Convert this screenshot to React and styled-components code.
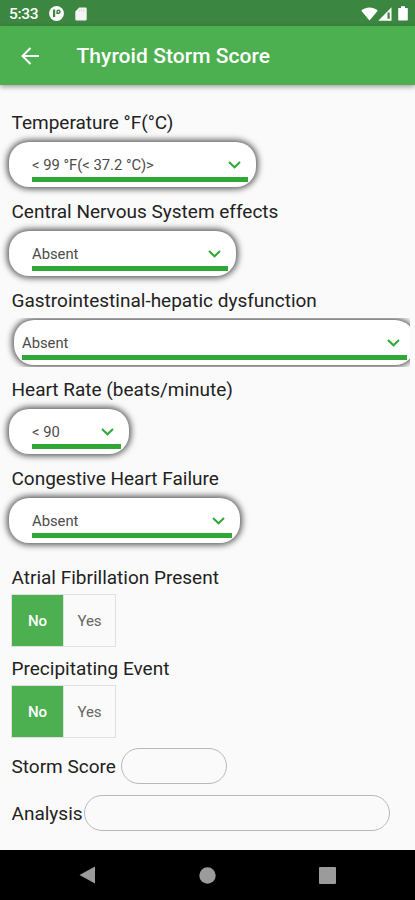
import React, { useState } from "react";
import styled, { createGlobalStyle } from "styled-components";

const GlobalStyle = createGlobalStyle`
  * {
    box-sizing: border-box;
  }

  body {
    margin: 0;
    background: #fafafa;
    font-family: Roboto, "Liberation Sans", sans-serif;
  }

  button {
    font-family: inherit;
  }
`;

// --- STYLED COMPONENTS ---

const Screen = styled.div`
  width: 415px;
  height: 900px;
  display: flex;
  flex-direction: column;
  overflow: hidden;
  background: #fafafa;
`;

const StatusBar = styled.div`
  height: 26px;
  flex: none;
  display: flex;
  align-items: center;
  justify-content: space-between;
  padding: 1px 7px 0 9px;
  background: #3b8640;
  color: #fff;
`;

const StatusGroup = styled.div`
  display: flex;
  align-items: center;
  gap: ${(p) => p.$gap};

  svg {
    display: block;
  }
`;

const Clock = styled.span`
  width: 29px;
  font-size: 15.5px;
  font-weight: 500;
  letter-spacing: -0.3px;
`;

const AppBar = styled.header`
  height: 59px;
  flex: none;
  display: flex;
  align-items: center;
  padding: 0 20px;
  background: #4caf50;
  color: #fff;
  box-shadow: 0 2px 5px rgba(0, 0, 0, 0.36);
  z-index: 1;
`;

const BackButton = styled.button`
  display: flex;
  width: 56.5px;
  padding: 0;
  border: none;
  background: none;
  color: inherit;
`;

const Title = styled.h1`
  margin: 0;
  padding-top: 1px;
  font-size: 21px;
  line-height: 28px;
  font-weight: 500;
  letter-spacing: 0.05px;
  white-space: nowrap;
`;

const Content = styled.main`
  flex: 1;
  padding: 26px 5px 0 9px;
  overflow: hidden;
`;

const Field = styled.section`
  height: ${(p) => p.$height || 89}px;
`;

const Label = styled.div`
  padding-left: 2.5px;
  font-size: 19px;
  line-height: 24px;
  color: #222;
  white-space: nowrap;
`;

/* Long selects run past the edge, so the wide one clips its own shadow */
const SelectClip = styled.div`
  margin-left: -9px;
  padding: ${(p) => (p.$wide ? "2px 0 2px 14px" : "2px 0 2px 9px")};
  margin-top: 5px;
  overflow: ${(p) => (p.$wide ? "hidden" : "visible")};
`;

const SelectBox = styled.div`
  width: ${(p) => p.$width}px;
  height: 45px;
  padding: 12px 8px 0 ${(p) => (p.$wide ? 8 : 23)}px;
  border-radius: 20px;
  background: #fff;
  box-shadow: 0 0 6px 2px rgba(0, 0, 0, 0.66);
`;

const SelectValue = styled.div`
  height: 28px;
  display: flex;
  align-items: flex-start;
  justify-content: space-between;
  padding-right: 7px;
  border-bottom: 5px solid #30a837;
  font-size: 14.8px;
  line-height: 22px;
  color: #4c4c4c;
  white-space: nowrap;

  svg {
    flex: none;
    margin-top: 7px;
  }
`;

const Toggle = styled.div`
  display: flex;
  width: 105px;
  height: 53px;
  margin: 4px 0 0 2px;
  border: 1px solid #e0e0e0;
`;

const ToggleOption = styled.button`
  flex: 1;
  padding: 0;
  border: none;
  border-left: ${(p) => (p.$divided ? "1px solid #e0e0e0" : "none")};
  background: ${(p) => (p.$selected ? "#4caf50" : "transparent")};
  color: ${(p) => (p.$selected ? "#fff" : "#666")};
  font-size: 15px;
  font-weight: ${(p) => (p.$selected ? 500 : 400)};
`;

const ResultRow = styled.div`
  display: flex;
  align-items: center;
  height: 36px;
  margin-bottom: 11px;
`;

const ResultLabel = styled(Label)`
  width: ${(p) => p.$width}px;
  padding-top: 1px;
`;

const ResultBox = styled.div`
  width: ${(p) => p.$width}px;
  height: 36px;
  border: 1px solid #b8b8b8;
  border-radius: 18px;
`;

const NavBar = styled.nav`
  height: 50px;
  flex: none;
  display: flex;
  align-items: center;
  justify-content: space-between;
  padding: 0 79px;
  background: #000;

  svg {
    display: block;
  }
`;

// --- ICONS ---

const Chevron = () => (
  <svg width="13" height="8" viewBox="0 0 13 8" fill="none">
    <path d="M1 1l5.500 5.300L12 1" stroke="#30a837" strokeWidth="2" />
  </svg>
);

const BackArrow = () => (
  <svg width="20" height="20" viewBox="0 0 20 20" fill="none">
    <path d="M19 10H3M10.500 2L2.500 10l8 8" stroke="#fff" strokeWidth="2" />
  </svg>
);

const AppBadge = () => (
  <svg width="15" height="15" viewBox="0 0 15 15">
    <circle cx="7.500" cy="7.500" r="7.400" fill="#fff" />
    <path d="M4 3.500h2.200v7.600H4z" fill="#3b8640" />
    <path d="M8 5.800a1.500 1.500 0 1 1 1.500 1.500H8z" stroke="#3b8640" strokeWidth="1.400" fill="none" />
  </svg>
);

const SdCard = () => (
  <svg width="12" height="14" viewBox="0 0 12 14">
    <path d="M4.200.5h6.300a1.200 1.200 0 0 1 1.200 1.200v10.600a1.200 1.200 0 0 1-1.200 1.200h-9a1.200 1.200 0 0 1-1.200-1.200V4.500z" fill="#f4f4f4" />
    <path d="M4.300 2.500v2M6.500 2.500v2M8.700 2.500v2" stroke="#cfdccf" strokeWidth="1" />
  </svg>
);

const Wifi = () => (
  <svg width="17" height="14" viewBox="0 0 17 14">
    <path d="M8.500 13.500L.3 3.700C5-.7 12-.7 16.700 3.700z" fill="#fff" />
  </svg>
);

const Signal = () => (
  <svg width="14" height="14" viewBox="0 0 14 14">
    <path d="M13.500.3v13.400H.3z" fill="#fff" />
    <path d="M9.500 5.500h2.200v6.300H9.500z" fill="#3b8640" />
  </svg>
);

const Battery = () => (
  <svg width="10" height="15" viewBox="0 0 10 15">
    <path d="M3 .3h4v1.700h2.200a.6.6 0 0 1 .6.6v11.200a.7.7 0 0 1-.7.7H.9a.7.7 0 0 1-.7-.7V2.600A.6.6 0 0 1 .8 2H3z" fill="#fff" />
  </svg>
);

// --- COMPONENT ---

const SELECTS = [
  { label: "Temperature °F(°C)", value: "< 99 °F(< 37.2 °C)>", width: 247 },
  { label: "Central Nervous System effects", value: "Absent", width: 227 },
  { label: "Gastrointestinal-hepatic dysfunction", value: "Absent", width: 401, wide: true },
  { label: "Heart Rate (beats/minute)", value: "< 90", width: 120 },
  { label: "Congestive Heart Failure", value: "Absent", width: 231, height: 99 },
];

const TOGGLES = ["Atrial Fibrillation Present", "Precipitating Event"];

const YesNo = () => {
  const [value, setValue] = useState("No");

  return (
    <Toggle>
      {["No", "Yes"].map((option, i) => (
        <ToggleOption
          key={option}
          $divided={i > 0}
          $selected={value === option}
          onClick={() => setValue(option)}
        >
          {option}
        </ToggleOption>
      ))}
    </Toggle>
  );
};

const App = () => {
  return (
    <>
      <GlobalStyle />
      <Screen>
        <StatusBar>
          <StatusGroup $gap="11px">
            <Clock>5:33</Clock>
            <AppBadge />
            <SdCard />
          </StatusGroup>
          <StatusGroup $gap="6px">
            <StatusGroup $gap="0">
              <Wifi />
              <Signal />
            </StatusGroup>
            <Battery />
          </StatusGroup>
        </StatusBar>

        <AppBar>
          <BackButton aria-label="Back">
            <BackArrow />
          </BackButton>
          <Title>Thyroid Storm Score</Title>
        </AppBar>

        <Content>
          {SELECTS.map((item) => (
            <Field key={item.label} $height={item.height}>
              <Label>{item.label}</Label>
              <SelectClip $wide={item.wide}>
                <SelectBox $width={item.width} $wide={item.wide}>
                  <SelectValue>
                    {item.value}
                    <Chevron />
                  </SelectValue>
                </SelectBox>
              </SelectClip>
            </Field>
          ))}

          {TOGGLES.map((label) => (
            <Field key={label} $height={91}>
              <Label>{label}</Label>
              <YesNo />
            </Field>
          ))}

          <ResultRow>
            <ResultLabel $width={112}>Storm Score</ResultLabel>
            <ResultBox $width={106} />
          </ResultRow>
          <ResultRow>
            <ResultLabel $width={74.5}>Analysis</ResultLabel>
            <ResultBox $width={306} />
          </ResultRow>
        </Content>

        <NavBar>
          <svg width="17" height="18" viewBox="0 0 17 18">
            <path d="M.5 9L16 .5v17z" fill="#9b9b9b" />
          </svg>
          <svg width="17" height="17" viewBox="0 0 17 17">
            <circle cx="8.500" cy="8.500" r="8.200" fill="#9b9b9b" />
          </svg>
          <svg width="17" height="17" viewBox="0 0 17 17">
            <rect width="17" height="17" rx="1" fill="#9b9b9b" />
          </svg>
        </NavBar>
      </Screen>
    </>
  );
};

export default App;
